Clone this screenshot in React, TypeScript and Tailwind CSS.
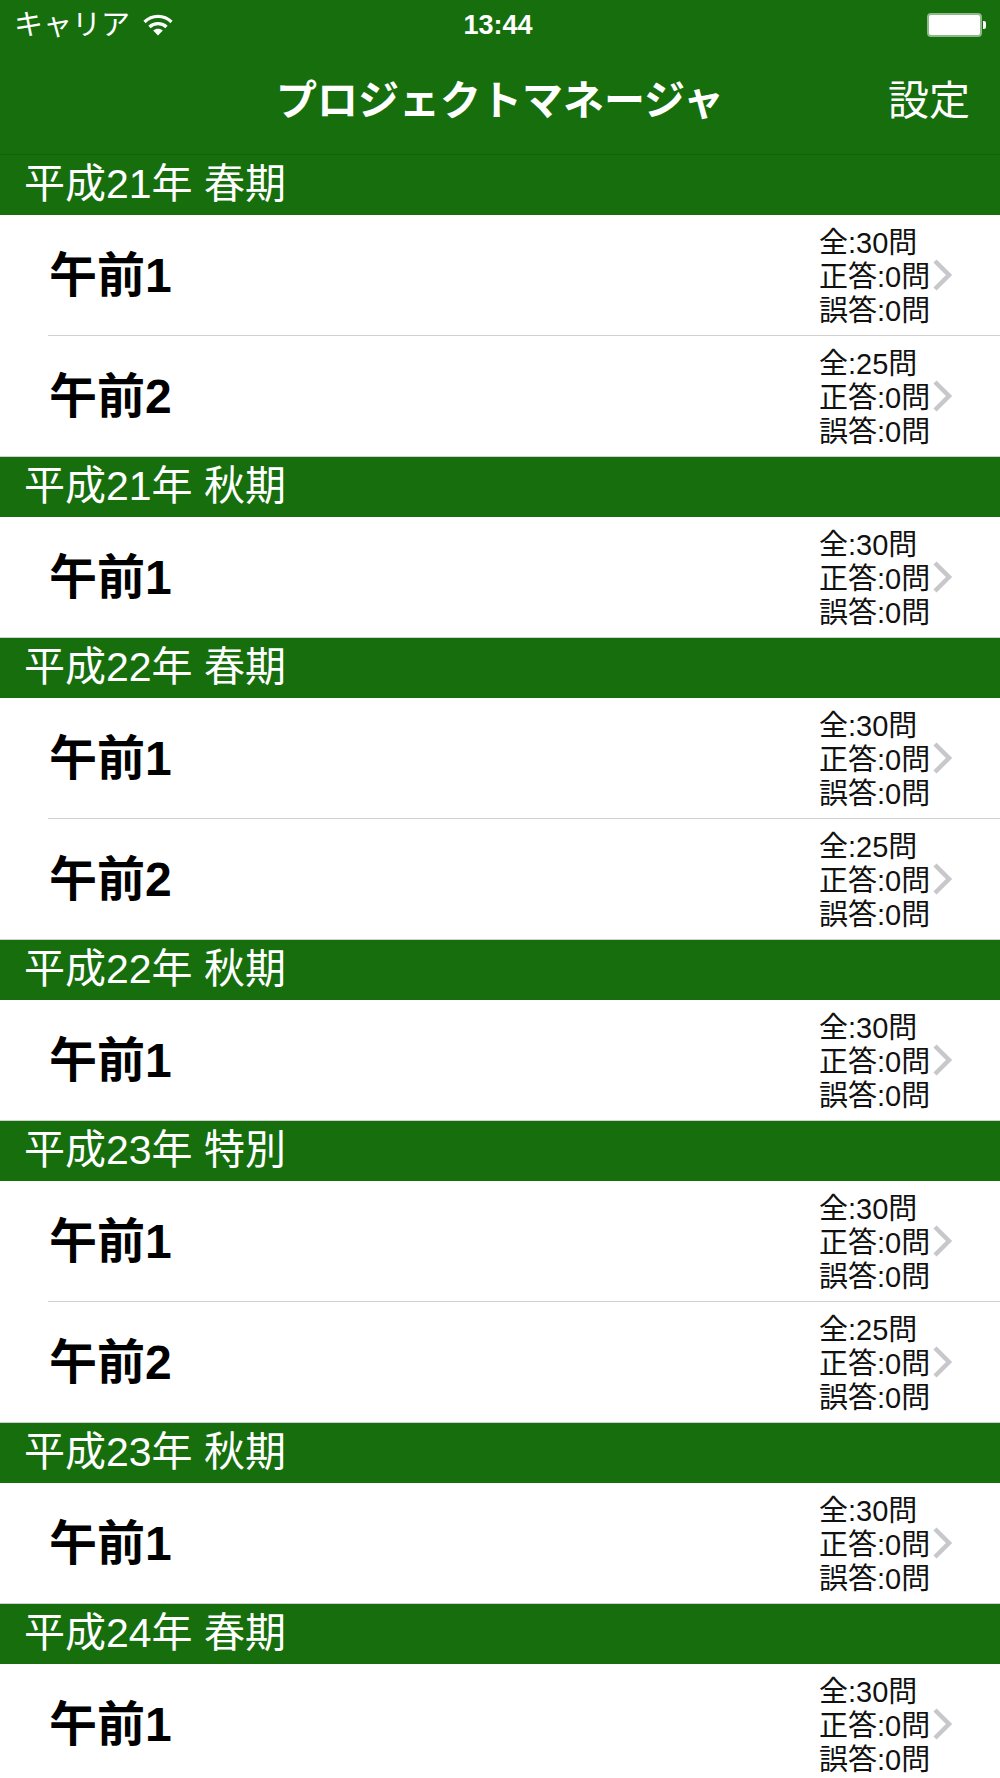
const font = "[font-family:'Liberation_Sans','Noto_Sans_CJK_JP',sans-serif]";

const sections = [
  { title: "平成21年 春期", rows: [{ name: "午前1", total: 30 }, { name: "午前2", total: 25 }] },
  { title: "平成21年 秋期", rows: [{ name: "午前1", total: 30 }] },
  { title: "平成22年 春期", rows: [{ name: "午前1", total: 30 }, { name: "午前2", total: 25 }] },
  { title: "平成22年 秋期", rows: [{ name: "午前1", total: 30 }] },
  { title: "平成23年 特別", rows: [{ name: "午前1", total: 30 }, { name: "午前2", total: 25 }] },
  { title: "平成23年 秋期", rows: [{ name: "午前1", total: 30 }] },
  { title: "平成24年 春期", rows: [{ name: "午前1", total: 30 }] },
];

const WifiIcon = () => (
  <svg width="30" height="22" viewBox="0 0 30 22" fill="none" stroke="white" strokeWidth="3.2">
    <path d="M1.5 8 C9 0.6 21 0.6 28.5 8" />
    <path d="M6.5 13 C11 8.6 19 8.6 23.5 13" />
    <path d="M15 21.5 L10.2 16.6 C13 14.2 17 14.2 19.8 16.6 Z" fill="white" stroke="none" />
  </svg>
);

const Battery = () => (
  <div className="flex items-center">
    <div className="w-[55px] h-[24px] rounded-[4px] border-2 border-[#8fb98b] bg-white" />
    <div className="w-[3px] h-[8px] rounded-r-[2px] bg-white ml-[1px]" />
  </div>
);

const Chevron = () => (
  <svg width="20" height="32" viewBox="0 0 20 32" fill="none" stroke="#c7c7cc" strokeWidth="4.5">
    <path d="M2 2 L16 16 L2 30" />
  </svg>
);

const Row = ({ name, total, last }: { name: string; total: number; last: boolean }) => (
  <div className="relative h-[121px] bg-white flex items-center pb-px">
    <div className="ml-[49px] pt-[1px] text-[48px] leading-none font-bold text-black">{name}</div>
    <div className="ml-auto w-[113px] pt-[3px] text-[29px] leading-[34px] text-[#111] whitespace-nowrap">
      <div>全:{total}問</div>
      <div>正答:0問</div>
      <div>誤答:0問</div>
    </div>
    <div className="ml-[1px] mr-[47px] flex">
      <Chevron />
    </div>
    <div className={last ? "absolute bottom-0 left-0 right-0 h-px bg-[#d0d0d0]" : "absolute bottom-0 left-[48px] right-0 h-px bg-[#d0d0d0]"} />
  </div>
);

export default function App() {
  return (
    <div className={`w-[1000px] h-[1778px] overflow-hidden bg-white ${font}`}>
      <header className="h-[155px] bg-[#166e0d] text-white border-b border-[#14620c]">
        <div className="h-[50px] grid grid-cols-[1fr_auto_1fr] items-center px-[14px]">
          <div className="flex items-center gap-[13px]">
            <span className="text-[29px] leading-none pt-[1px]">キャリア</span>
            <WifiIcon />
          </div>
          <div className="text-[27px] font-bold leading-none mr-[4px] pt-[1px]">13:44</div>
          <div className="flex justify-end">
            <Battery />
          </div>
        </div>
        <div className="h-[100px] grid grid-cols-[1fr_auto_1fr] items-center px-[30px]">
          <div />
          <div className="text-[41px] font-bold leading-none pt-[2px]">プロジェクトマネージャ</div>
          <div className="text-right text-[41px] leading-none pt-[2px]">設定</div>
        </div>
      </header>
      {sections.map((section) => (
        <section key={section.title}>
          <div className="h-[60px] bg-[#166e0d] text-white text-[41px] leading-[59px] pl-[24px] whitespace-pre">
            {section.title}
          </div>
          {section.rows.map((row, i) => (
            <Row key={row.name} name={row.name} total={row.total} last={i === section.rows.length - 1} />
          ))}
        </section>
      ))}
    </div>
  );
}
